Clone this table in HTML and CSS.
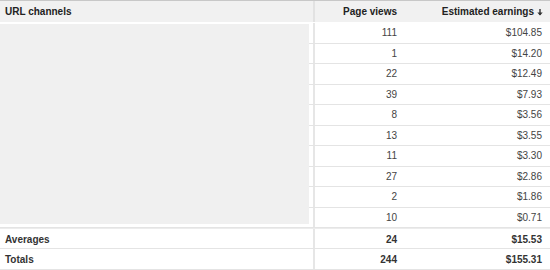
FILE: index.html
```html
<!DOCTYPE html>
<html>
<head>
<meta charset="utf-8">
<link rel="stylesheet" href="styles.css">
</head>
<body>
<div class="report">
  <div class="row head">
    <div class="cell name">URL channels</div>
    <div class="cell num">Page views</div>
    <div class="cell num sort">Estimated earnings<svg class="arrow" width="6" height="7" viewBox="0 0 6 7"><path d="M3 0V6" stroke="#333" stroke-width="1.4"/><path d="M0.3 3.4L3 6.6L5.7 3.4Z" fill="#333"/></svg></div>
  </div>
  <div class="row"><div class="cell name"></div><div class="cell num">111</div><div class="cell num">$104.85</div></div>
  <div class="row"><div class="cell name"></div><div class="cell num">1</div><div class="cell num">$14.20</div></div>
  <div class="row"><div class="cell name"></div><div class="cell num">22</div><div class="cell num">$12.49</div></div>
  <div class="row"><div class="cell name"></div><div class="cell num">39</div><div class="cell num">$7.93</div></div>
  <div class="row"><div class="cell name"></div><div class="cell num">8</div><div class="cell num">$3.56</div></div>
  <div class="row"><div class="cell name"></div><div class="cell num">13</div><div class="cell num">$3.55</div></div>
  <div class="row"><div class="cell name"></div><div class="cell num">11</div><div class="cell num">$3.30</div></div>
  <div class="row"><div class="cell name"></div><div class="cell num">27</div><div class="cell num">$2.86</div></div>
  <div class="row"><div class="cell name"></div><div class="cell num">2</div><div class="cell num">$1.86</div></div>
  <div class="row"><div class="cell name"></div><div class="cell num">10</div><div class="cell num">$0.71</div></div>
  <div class="row total first"><div class="cell name">Averages</div><div class="cell num">24</div><div class="cell num">$15.53</div></div>
  <div class="row total"><div class="cell name">Totals</div><div class="cell num">244</div><div class="cell num">$155.31</div></div>
  <div class="redact"></div>
</div>
</body>
</html>
```
FILE: styles.css
```css
html, body {
  margin: 0;
  padding: 0;
  background: #fff;
}
body {
  font-family: "Liberation Sans", Arial, sans-serif;
  font-size: 10px;
  color: #444;
}
.report {
  position: relative;
  width: 550px;
  border-top: 1px solid #c8c8c8;
}
.row {
  display: grid;
  grid-template-columns: 313px 92px 145px;
  box-sizing: border-box;
  height: 20.5px;
  border-bottom: 1px solid #e4e4e4;
  align-items: stretch;
}
.cell {
  display: flex;
  align-items: center;
  white-space: nowrap;
}
.cell.name {
  padding-left: 5px;
}
.cell.num {
  justify-content: flex-end;
  padding-right: 8px;
}
.row > .cell:nth-child(2) {
  border-left: 2px solid #e6e6e6;
}
.head {
  height: 22px;
  background: #f1f1f1;
  border-bottom: 1px solid #fff;
  font-weight: bold;
  color: #222;
}
.head > .cell:nth-child(2) {
  border-left: 2px solid #e2e2e2;
}
.head .sort {
  padding-right: 7px;
}
.arrow {
  margin-left: 3px;
  margin-top: 2px;
}
.total {
  font-weight: bold;
  color: #333;
  height: 21px;
}
.total > .cell {
  padding-top: 1px;
}
.total.first {
  border-top: 1px solid #ececec;
}
.redact {
  position: absolute;
  left: 0;
  top: 23px;
  width: 309px;
  height: 200px;
  background: #f0f0f0;
}
```
